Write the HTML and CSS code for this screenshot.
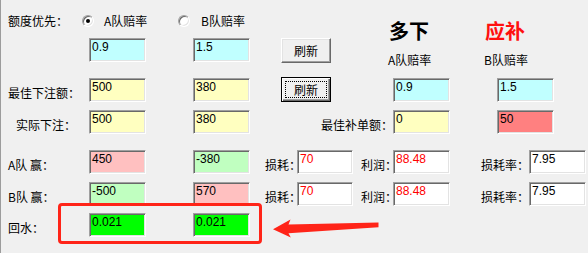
FILE: index.html
```html
<!DOCTYPE html>
<html lang="zh-CN">
<head>
  <meta charset="UTF-8">
  <title>额度计算</title>
  <link rel="stylesheet" href="styles.css">
</head>
<body>

<div class="dlg">
  <div class="top">
    <div class="top-left">
      <div class="row row-radio">
        <span class="lbl">额度优先：</span>
        <label class="opt opt--a"><span class="radio radio--on"></span><span>A队赔率</span></label>
        <label class="opt"><span class="radio"></span><span>B队赔率</span></label>
      </div>
      <div class="row row-odds">
        <span class="lbl"></span>
        <div class="edit edit--cyan">0.9</div>
        <div class="edit edit--cyan col-b">1.5</div>
        <button class="btn">刷新</button>
      </div>
    </div>
    <div class="top-right">
      <div class="heads">
        <span class="head head--a">多下</span>
        <span class="head head--b">应补</span>
      </div>
      <div class="subs">
        <span class="sub sub--a">A队赔率</span>
        <span class="sub sub--b">B队赔率</span>
      </div>
    </div>
  </div>

  <div class="row row-best">
    <span class="lbl">最佳下注额：</span>
    <div class="edit edit--yel">500</div>
    <div class="edit edit--yel col-b">380</div>
    <button class="btn btn--default"><span class="focus">刷新</span></button>
    <div class="edit edit--cyan col-c">0.9</div>
    <div class="edit edit--cyan col-d">1.5</div>
  </div>

  <div class="row row-real">
    <span class="lbl lbl--indent">实际下注：</span>
    <div class="edit edit--yel">500</div>
    <div class="edit edit--yel col-b">380</div>
    <span class="lbl lbl--hedge">最佳补单额：</span>
    <div class="edit edit--yel">0</div>
    <div class="edit edit--red col-d">50</div>
  </div>

  <div class="row row-win">
    <span class="lbl">A队 赢：</span>
    <div class="edit edit--pink">450</div>
    <div class="edit edit--grn col-b">-380</div>
    <span class="lbl lbl--loss">损耗：</span>
    <div class="edit edit--narrow txt-red">70</div>
    <span class="lbl lbl--profit">利润：</span>
    <div class="edit txt-red">88.48</div>
    <span class="lbl lbl--rate">损耗率：</span>
    <div class="edit">7.95</div>
  </div>

  <div class="row row-win2">
    <span class="lbl">B队 赢：</span>
    <div class="edit edit--grn">-500</div>
    <div class="edit edit--pink col-b">570</div>
    <span class="lbl lbl--loss">损耗：</span>
    <div class="edit edit--narrow txt-red">70</div>
    <span class="lbl lbl--profit">利润：</span>
    <div class="edit txt-red">88.48</div>
    <span class="lbl lbl--rate">损耗率：</span>
    <div class="edit">7.95</div>
  </div>

  <div class="row row-rebate">
    <span class="lbl">回水：</span>
    <div class="edit edit--lime">0.021</div>
    <div class="edit edit--lime col-b">0.021</div>
  </div>

  <!-- annotation drawn over the dialog -->
  <div class="mark"></div>
  <svg class="arrow" viewBox="271 216 110 26" width="110" height="26">
    <path d="M273 229.3 L290.5 219.5 L288.5 224.6 L378.5 222.6 L378.5 227.2 L288.5 233.2 L290.8 237.4 Z" fill="#ff2418"/>
  </svg>
</div>

</body>
</html>
```

FILE: styles.css
```css
* { margin: 0; padding: 0; box-sizing: border-box; }
body {
  background: #f0f0f0;
  font-family: "Noto Sans CJK SC", "Liberation Sans", sans-serif;
  font-size: 12px;
  color: #000;
}
.dlg {
  position: relative;
  height: 253px;
  border-left: 1px solid #9c9c9c;
}
.top { display: flex; }
.top-left { width: 392px; }
.top-right { padding-top: 19px; }
.row {
  display: flex;
  align-items: flex-start;
  padding-left: 7px;
  height: 24px;
}
.lbl {
  flex: none;
  width: 81px;
  align-self: flex-end;
  line-height: 14px;
  margin-bottom: 2px;
  white-space: nowrap;
}
.lbl--indent { padding-left: 8px; }
.lbl--hedge { width: 143px; text-align: right; }
.lbl--loss { width: 47px; padding-left: 15px; }
.lbl--profit { width: 40px; padding-left: 8px; }
.lbl--rate { width: 79px; padding-left: 31px; }

/* radio row */
.row-radio { margin-top: 14px; height: 14px; align-items: center; }
.row-radio .lbl { width: 74px; align-self: center; margin-bottom: 0; }
.opt { display: flex; align-items: center; gap: 10px; line-height: 14px; }
.opt--a { width: 96px; }
.opt--a + .opt { gap: 11px; }
.radio {
  position: relative;
  width: 12px;
  height: 12px;
  border-radius: 50%;
  background: #fff;
  border: 1px solid;
  border-color: #a0a0a0 #fff #fff #a0a0a0;
  box-shadow: inset 1px 1px #696969, inset -1px -1px #e3e3e3;
}
.radio--on::after {
  content: "";
  position: absolute;
  left: 3px;
  top: 3px;
  width: 4px;
  height: 4px;
  border-radius: 50%;
  background: #000;
}
.row-odds { margin-top: 10px; height: 25px; }

/* headings on the right */
.heads, .subs { display: flex; }
.head {
  width: 104px;
  font-size: 20px;
  font-weight: 700;
  line-height: 24px;
}
.head--a { padding-left: 9px; }
.head--b { color: #ff1010; padding-left: 1px; }
.subs { margin-top: 10px; }
.sub { width: 104px; line-height: 14px; }
.sub--a { padding-left: 8px; }

.row-best { margin-top: 10px; height: 25px; }
.row-best .edit { margin-top: 1px; }
.row-real { margin-top: 8px; }
.row-win { margin-top: 16px; }
.row-win2 { margin-top: 8px; }
.row-rebate { margin-top: 7px; }

/* edit boxes */
.edit {
  flex: none;
  width: 57px;
  height: 24px;
  padding: 1px 2px 0;
  background: #fff;
  border: 1px solid;
  border-color: #a0a0a0 #fff #fff #a0a0a0;
  box-shadow: inset 1px 1px #696969, inset -1px -1px #e3e3e3;
  font-family: "Liberation Sans", Arial, sans-serif;
  font-size: 12px;
  line-height: 14px;
  white-space: nowrap;
}
.edit--narrow { width: 56px; }
.edit--cyan { background: #c0ffff; }
.edit--yel { background: #ffffc0; }
.edit--pink { background: #ffc0c0; }
.edit--grn { background: #c0ffc0; }
.edit--lime { background: #00ff00; }
.edit--red { background: #ff8080; }
.txt-red { color: #f00; }
.col-b { margin-left: 47px; }
.col-c { margin-left: 62px; }
.col-d { margin-left: 47px; }

/* push buttons */
.btn {
  flex: none;
  margin-left: 31px;
  width: 50px;
  height: 25px;
  background: #f0f0f0;
  border: 1px solid;
  border-color: #fff #696969 #696969 #fff;
  box-shadow: inset -1px -1px #a0a0a0, inset 1px 1px #e3e3e3;
  font-family: inherit;
  font-size: 12px;
  line-height: 14px;
  color: #000;
}
.btn--default {
  border-color: #000;
  box-shadow: inset 1px 1px #fff, inset -1px -1px #696969, inset -2px -2px #a0a0a0;
  padding: 3px;
}
.focus {
  display: block;
  height: 17px;
  line-height: 15px;
  border: 1px dotted #000;
}

/* red annotation */
.mark {
  position: absolute;
  left: 57px;
  top: 203px;
  width: 204px;
  height: 41px;
  border: 3px solid #ff2418;
  border-radius: 4px;
}
.arrow {
  position: absolute;
  left: 270px;
  top: 216px;
}
```
